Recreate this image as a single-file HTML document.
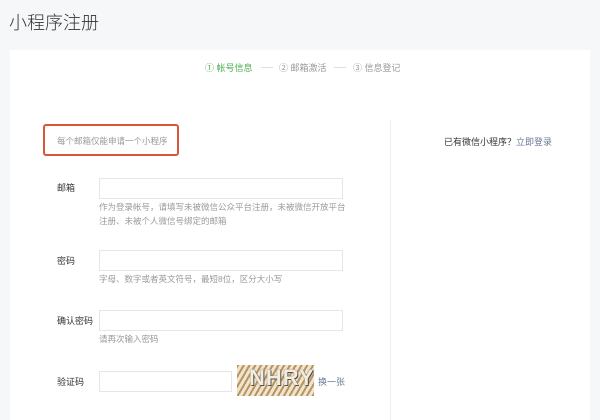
<!DOCTYPE html>
<html><head><meta charset="utf-8"><style>
*{margin:0;padding:0;box-sizing:border-box}
body{width:600px;height:408px;overflow:hidden;background:#f5f7f9;font-family:"Liberation Sans","Noto Sans CJK SC",sans-serif;position:relative}
.a{position:absolute;white-space:nowrap}
.card{position:absolute;left:10px;top:50px;width:580px;height:370px;background:#fff}
.in{position:absolute;border:1px solid #e4e6e8;background:#fff;height:21px}
.lab{font-size:9px;color:#333}
.tip{font-size:8.5px;color:#9a9a9a;line-height:14px}
</style></head><body>
<div class="a" style="left:9px;top:9px;font-size:18px;color:#333;font-weight:300">小程序注册</div>
<div class="card"></div>
<div class="a" style="left:205px;top:61px;font-size:9px;color:#4caf50">① 帐号信息</div>
<div class="a" style="left:261px;top:67px;width:12px;border-top:1px solid #ddd"></div>
<div class="a" style="left:279px;top:61px;font-size:9px;color:#999">② 邮箱激活</div>
<div class="a" style="left:334px;top:67px;width:12px;border-top:1px solid #ddd"></div>
<div class="a" style="left:353px;top:61px;font-size:9px;color:#999">③ 信息登记</div>
<div class="a" style="left:390px;top:120px;width:1px;height:300px;background:#eee"></div>
<div class="a" style="left:43px;top:124px;width:136px;height:32px;border:2px solid #d9553a;border-radius:3px"></div>
<div class="a" style="left:57px;top:135px;font-size:8.5px;color:#999">每个邮箱仅能申请一个小程序</div>
<div class="a" style="left:444px;top:135px;font-size:9px;color:#333">已有微信小程序？<span style="color:#6b7a99">立即登录</span></div>
<div class="a lab" style="left:57px;top:181px">邮箱</div>
<div class="in" style="left:99px;top:178px;width:244px"></div>
<div class="a tip" style="left:99px;top:200px">作为登录帐号，请填写未被微信公众平台注册，未被微信开放平台<br>注册、未被个人微信号绑定的邮箱</div>
<div class="a lab" style="left:57px;top:254px">密码</div>
<div class="in" style="left:99px;top:250px;width:244px"></div>
<div class="a tip" style="left:99px;top:272px">字母、数字或者英文符号，最短8位，区分大小写</div>
<div class="a lab" style="left:57px;top:314px">确认密码</div>
<div class="in" style="left:99px;top:310px;width:244px"></div>
<div class="a tip" style="left:99px;top:332px">请再次输入密码</div>
<div class="a lab" style="left:57px;top:375px">验证码</div>
<div class="in" style="left:99px;top:371px;width:133px"></div>
<div class="a" style="left:237px;top:365px;width:77px;height:31px;background:repeating-linear-gradient(120deg,#b8955e 0 2px,#efe4cf 2px 5px);color:#f4ecdc;font:bold 22px 'Liberation Sans';letter-spacing:1px;text-shadow:0 0 1px #333,1px 1px 0 #555;padding-left:12px">NHRY</div>
<div class="a" style="left:318px;top:375px;font-size:9px;color:#6b7a99">换一张</div>
</body></html>
